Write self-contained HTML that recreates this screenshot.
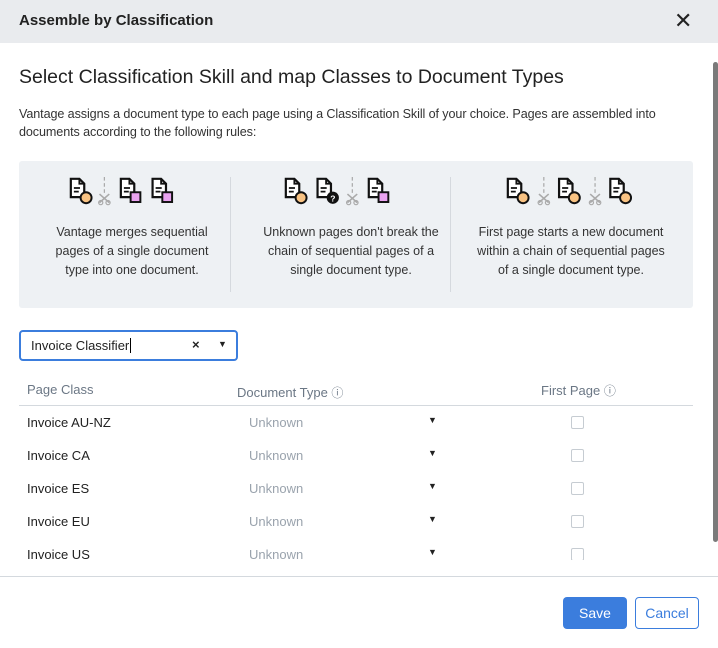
<!DOCTYPE html>
<html><head><style>
body{margin:0;width:718px;height:648px;overflow:hidden;background:#fff;font-family:"Liberation Sans",sans-serif;color:#222;position:relative}
.hdr{position:absolute;left:0;top:0;width:718px;height:43px;background:#e9ebee}
.hdr b{position:absolute;left:19px;top:12px;font-size:15px}
.x{position:absolute;left:674px;top:10px;font-size:22px;line-height:22px}
.abs{position:absolute}
.box{left:19px;top:161px;width:674px;height:147px;background:#eef1f4;border-radius:3px}
.col{position:absolute;top:0;width:210px;text-align:center;font-size:12.5px;line-height:19px;color:#333}
.col p{margin:0;position:absolute;top:62px;width:100%}
.sep{position:absolute;top:16px;width:1px;height:115px;background:#d5d9de}
.row{position:absolute;left:19px;width:674px;height:33px;font-size:13px}
.row span{position:absolute;top:9px}
.cb{position:absolute;left:552px;top:10px;width:11px;height:11px;border:1px solid #c6ccd2;border-radius:2px;background:#fff}
.tri{position:absolute;left:409px;top:11px;font-size:9px}
</style></head><body>
<div class="hdr"><b>Assemble by Classification</b><div class="x">✕</div></div>
<div class="abs" style="left:19px;top:66px;font-size:19.5px;color:#222">Select Classification Skill and map Classes to Document Types</div>
<div class="abs" style="left:19px;top:105px;width:690px;font-size:12.6px;line-height:18px;color:#333;letter-spacing:-0.1px">Vantage assigns a document type to each page using a Classification Skill of your choice. Pages are assembled into documents according to the following rules:</div>
<svg width="0" height="0" style="position:absolute"><defs>
<g id="doc"><path d="M1.5 1.5h7l4 4v11h-11z" fill="#fff" stroke="#111" stroke-width="1.8"/><path d="M8.5 1.5v4h4M4 9h5M4 12h4" stroke="#111" stroke-width="1.5" fill="none"/></g>
<g id="cut"><path d="M5 0v15" stroke="#aaa" stroke-dasharray="3 2"/><path d="M1 14l8 7M9 14l-8 7" stroke="#aaa" stroke-width="1.3"/><circle cx="2" cy="21" r="1.7" fill="none" stroke="#aaa"/><circle cx="8" cy="21" r="1.7" fill="none" stroke="#aaa"/></g>
<g id="o"><use href="#doc"/><circle cx="14" cy="17" r="4.5" fill="#f9c383" stroke="#111" stroke-width="1.6"/></g>
<g id="s"><use href="#doc"/><rect x="9.5" y="12.5" width="8" height="8" fill="#eaa3f0" stroke="#111" stroke-width="1.6"/></g>
<g id="q"><use href="#doc"/><circle cx="14" cy="17" r="5" fill="#111"/><text x="14" y="20" font-size="7" fill="#fff" text-anchor="middle" font-weight="bold" font-family="Liberation Sans">?</text></g>
</defs></svg>
<div class="abs box">
 <div class="col" style="left:8px"><svg class="abs" style="left:42px;top:16px" width="130" height="40"><g transform="scale(1.22)"><use href="#o"/><use href="#cut" x="24"/><use href="#s" x="41"/><use href="#s" x="67"/></g></svg><p>Vantage merges sequential<br>pages of a single document<br>type into one document.</p></div>
 <div class="sep" style="left:211px"></div>
 <div class="col" style="left:227px"><svg class="abs" style="left:38px;top:16px" width="130" height="40"><g transform="scale(1.22)"><use href="#o"/><use href="#q" x="26"/><use href="#cut" x="51"/><use href="#s" x="68"/></g></svg><p>Unknown pages don't break the<br>chain of sequential pages of a<br>single document type.</p></div>
 <div class="sep" style="left:431px"></div>
 <div class="col" style="left:447px"><svg class="abs" style="left:40px;top:16px" width="140" height="40"><g transform="scale(1.22)"><use href="#o"/><use href="#cut" x="26"/><use href="#o" x="42"/><use href="#cut" x="68"/><use href="#o" x="84"/></g></svg><p>First page starts a new document<br>within a chain of sequential pages<br>of a single document type.</p></div>
</div>
<div class="abs" style="left:19px;top:330px;width:215px;height:27px;border:2px solid #3b7ddd;border-radius:4px;font-size:13px">
 <span class="abs" style="left:10px;top:6px">Invoice Classifier<span style="border-left:1px solid #000;margin-left:1px"></span></span>
 <span class="abs" style="left:171px;top:5px;font-weight:bold">×</span>
 <span class="abs" style="left:197px;top:7px;font-size:9px">▼</span>
</div>
<div class="abs" style="left:27px;top:382px;font-size:13px;color:#6b7785">Page Class</div>
<div class="abs" style="left:237px;top:384px;font-size:13px;color:#6b7785">Document Type <span style="font-size:12px">ⓘ</span></div>
<div class="abs" style="left:541px;top:382px;font-size:13px;color:#6b7785">First Page <span style="font-size:12px">ⓘ</span></div>
<div class="abs" style="left:19px;top:405px;width:674px;height:1px;background:#d4d9de"></div>
<div class="abs" style="left:0;top:406px;width:718px;height:154px;overflow:hidden">
<div class="row" style="top:0"><span style="left:8px">Invoice AU-NZ</span><span style="left:230px;color:#9aa3ad">Unknown</span><span class="tri">▼</span><div class="cb"></div></div>
<div class="row" style="top:33px"><span style="left:8px">Invoice CA</span><span style="left:230px;color:#9aa3ad">Unknown</span><span class="tri">▼</span><div class="cb"></div></div>
<div class="row" style="top:66px"><span style="left:8px">Invoice ES</span><span style="left:230px;color:#9aa3ad">Unknown</span><span class="tri">▼</span><div class="cb"></div></div>
<div class="row" style="top:99px"><span style="left:8px">Invoice EU</span><span style="left:230px;color:#9aa3ad">Unknown</span><span class="tri">▼</span><div class="cb"></div></div>
<div class="row" style="top:132px"><span style="left:8px">Invoice US</span><span style="left:230px;color:#9aa3ad">Unknown</span><span class="tri">▼</span><div class="cb"></div></div>
</div>
<div class="abs" style="left:713px;top:62px;width:5px;height:480px;background:#7a7a7a;border-radius:3px"></div>
<div class="abs" style="left:0;top:576px;width:718px;height:1px;background:#d4d9de"></div>
<div class="abs" style="left:563px;top:597px;width:64px;height:32px;background:#3b7ddd;border-radius:4px;color:#fff;font-size:14px;text-align:center;line-height:32px">Save</div>
<div class="abs" style="left:635px;top:597px;width:62px;height:30px;border:1px solid #3b7ddd;border-radius:4px;color:#3b7ddd;font-size:14px;text-align:center;line-height:30px">Cancel</div>
</body></html>
